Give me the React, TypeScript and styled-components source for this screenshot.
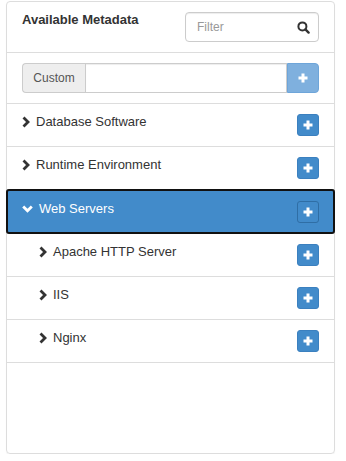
import React from "react";
import styled, { createGlobalStyle } from "styled-components";

const GlobalStyle = createGlobalStyle`
  html, body {
    margin: 0;
    padding: 0;
    background: #fff;
  }
  body {
    font-family: "Liberation Sans", Arial, sans-serif;
    font-size: 13px;
    color: #333;
  }
  * { box-sizing: border-box; }
`;

const Panel = styled.div`
  margin: 1px 0 0 6px;
  width: 329px;
  height: 453px;
  border: 1px solid #ddd;
  border-radius: 4px;
  box-shadow: 0 1px 1px rgba(0, 0, 0, 0.05);
  display: flex;
  flex-direction: column;
`;

const Header = styled.div`
  height: 51px;
  padding: 0 15px;
  display: flex;
  justify-content: space-between;
  align-items: flex-start;
  border-bottom: 1px solid #ddd;
`;

const Title = styled.h3`
  margin: 8px 0 0;
  font-size: 13px;
  font-weight: bold;
  line-height: 20px;
  color: #333;
`;

const FilterBox = styled.div`
  margin-top: 10px;
  width: 134px;
  height: 30px;
  border: 1px solid #ccc;
  border-radius: 4px;
  display: flex;
  align-items: center;
  padding: 0 8px 0 11px;
  box-shadow: inset 0 1px 1px rgba(0, 0, 0, 0.075);
`;

const FilterInput = styled.input`
  flex: 1;
  min-width: 0;
  border: none;
  outline: none;
  font: inherit;
  font-size: 12px;
  color: #555;
  padding: 0;
  &::placeholder {
    color: #999;
  }
`;

const CustomSection = styled.div`
  padding: 10px 15px;
  border-bottom: 1px solid #ddd;
`;

const InputGroup = styled.div`
  display: flex;
  height: 30px;
`;

const Addon = styled.span`
  width: 63px;
  display: flex;
  align-items: center;
  justify-content: center;
  background: #eee;
  border: 1px solid #ccc;
  border-right: none;
  border-radius: 4px 0 0 4px;
  color: #555;
  font-size: 12px;
`;

const GroupInput = styled.input`
  flex: 1;
  min-width: 0;
  border: 1px solid #ccc;
  font: inherit;
  padding: 0 12px;
  outline: none;
  box-shadow: inset 0 1px 1px rgba(0, 0, 0, 0.075);
`;

const GroupButton = styled.button`
  width: 32px;
  border: 1px solid #6ea5d9;
  border-radius: 0 4px 4px 0;
  background: #7fb0de;
  display: flex;
  align-items: center;
  justify-content: center;
  padding: 0;
`;

const List = styled.ul`
  list-style: none;
  margin: 0;
  padding: 0;
`;

const Row = styled.li<{ $level?: number; $active?: boolean }>`
  height: 43px;
  display: flex;
  align-items: flex-start;
  padding: 8px 15px 0 ${({ $level = 0 }) => 15 + $level * 17}px;
  border-bottom: 1px solid #ddd;
  background: #fff;
  color: #333;
  ${({ $active }) =>
    $active &&
    `
    position: relative;
    height: 45px;
    margin: -1px -1px 0;
    padding: 8px 14px 0 14px;
    border: 2px solid #111;
    border-radius: 3px;
    background: #428bca;
    color: #fff;
  `}
`;

const Label = styled.span`
  flex: 1;
  display: flex;
  align-items: center;
  gap: 6px;
  font-size: 13px;
  line-height: 20px;
`;

const AddButton = styled.button<{ $active?: boolean }>`
  width: 22px;
  height: 22px;
  margin-top: 2px;
  padding: 0;
  border-radius: 3px;
  border: 1px solid ${({ $active }) => ($active ? "#2f6ea5" : "#3b80bf")};
  background: #428bca;
  display: flex;
  align-items: center;
  justify-content: center;
`;

const Plus = () => (
  <svg width="10" height="10" viewBox="0 0 10 10">
    <path d="M5 0.5v9M0.5 5h9" stroke="#fff" strokeWidth="3" />
  </svg>
);

const Chevron = ({ down }: { down?: boolean }) =>
  down ? (
    <svg width="11" height="10" viewBox="0 0 11 10">
      <path d="M1.2 2.5l4.3 4.3 4.3-4.3" fill="none" stroke="#fff" strokeWidth="2.8" />
    </svg>
  ) : (
    <svg width="8" height="12" viewBox="0 0 8 12">
      <path d="M1.5 1.5L6 6 1.5 10.5" fill="none" stroke="#333" strokeWidth="2.8" />
    </svg>
  );

const Search = () => (
  <svg width="13" height="13" viewBox="0 0 13 13">
    <circle cx="5.4" cy="5.4" r="4" fill="none" stroke="#333" strokeWidth="2" />
    <path d="M8.4 8.4L11.6 11.6" stroke="#333" strokeWidth="2.4" strokeLinecap="round" />
  </svg>
);

type Item = { label: string; level?: number; active?: boolean };

const items: Item[] = [
  { label: "Database Software" },
  { label: "Runtime Environment" },
  { label: "Web Servers", active: true },
  { label: "Apache HTTP Server", level: 1 },
  { label: "IIS", level: 1 },
  { label: "Nginx", level: 1 },
];

export default function App() {
  return (
    <>
      <GlobalStyle />
      <Panel>
        <Header>
          <Title>Available Metadata</Title>
          <FilterBox>
            <FilterInput placeholder="Filter" />
            <Search />
          </FilterBox>
        </Header>
        <CustomSection>
          <InputGroup>
            <Addon>Custom</Addon>
            <GroupInput />
            <GroupButton disabled>
              <Plus />
            </GroupButton>
          </InputGroup>
        </CustomSection>
        <List>
          {items.map((it) => (
            <Row key={it.label} $level={it.level} $active={it.active}>
              <Label>
                <Chevron down={it.active} />
                {it.label}
              </Label>
              <AddButton $active={it.active}>
                <Plus />
              </AddButton>
            </Row>
          ))}
        </List>
      </Panel>
    </>
  );
}
